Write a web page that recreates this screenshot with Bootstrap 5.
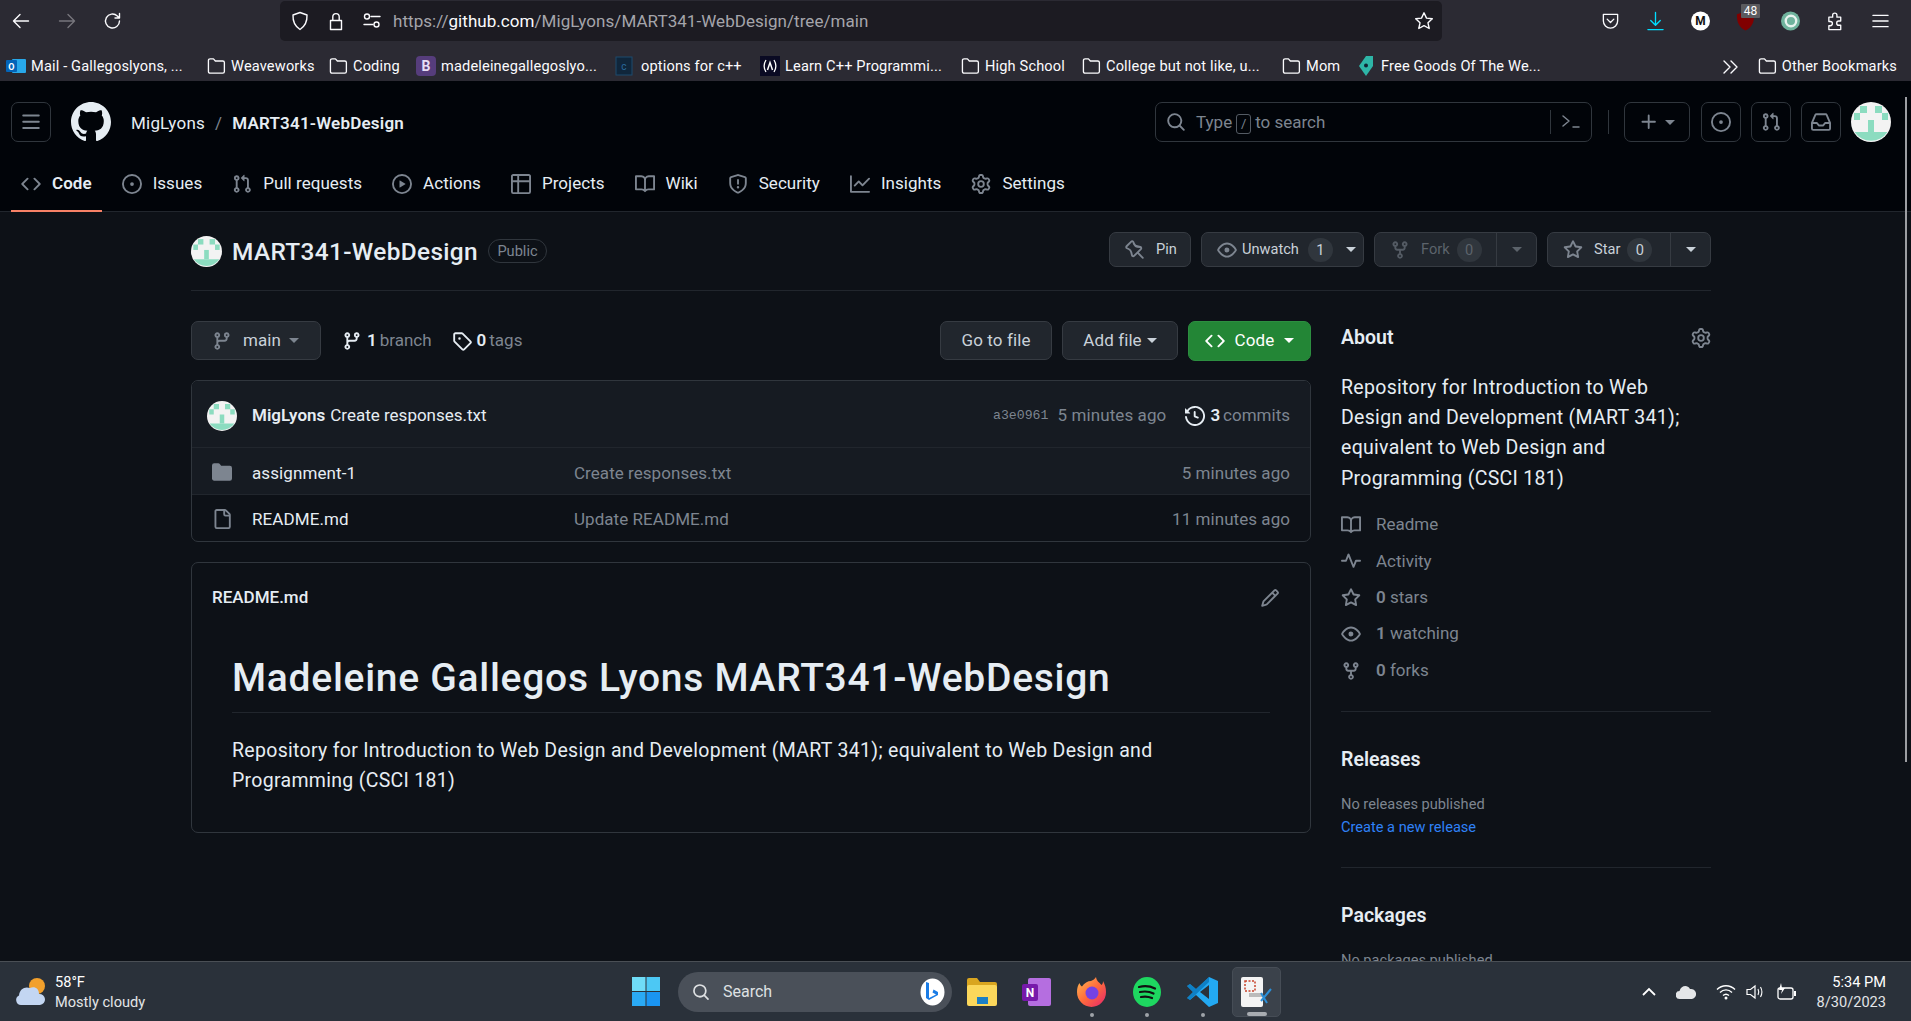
<!DOCTYPE html>
<html lang="en">
<head>
  <meta charset="UTF-8">
  <title>MigLyons/MART341-WebDesign</title>
  <link href="https://cdn.jsdelivr.net/npm/bootstrap@5.3.3/dist/css/bootstrap.min.css" rel="stylesheet">
  <style>
    html, body { height: 100%; overflow: hidden; }
    body { background: #0d1117; color: #e6edf3; font-family: Roboto, "Liberation Sans", sans-serif; font-size: 17px; }
    svg { display: block; flex: none; }
    a { text-decoration: none; color: inherit; }
    .oc { width: 20px; height: 20px; fill: currentColor; }
    .ln { fill: none; stroke: currentColor; stroke-width: 1.4; stroke-linecap: round; stroke-linejoin: round; }
    .shell { height: 1021px; }

    /* browser */
    .br-chrome { background: #2b2a33; height: 81px; color: #fbfbfe; flex: none; }
    .br-tools { height: 41px; padding: 0 0 0 11px; }
    .br-back { width: 20px; height: 20px; margin-right: 26px; }
    .br-off { color: #77767d; }
    .br-url { width: 1162px; height: 40px; margin-left: 157px; background: #1c1b22; border-radius: 5px; padding: 0 8px 0 10px; }
    .br-url svg { width: 20px; height: 20px; }
    .br-addr { font-size: 17px; color: #a5a5ab; margin-left: 11px; padding-top: 2px; white-space: nowrap; letter-spacing: .05px; }
    .br-addr b { font-weight: 400; color: #fbfbfe; }
    .br-ext { margin-left: auto; gap: 26px; padding-right: 21px; }
    .br-ext svg { width: 19px; height: 20px; }
    .br-ublock { position: relative; width: 19px; height: 20px; }
    .br-count { position: absolute; left: 5px; top: -7px; width: 19px; height: 14px; background: #5b5b5f; color: #fff; font-size: 12px; line-height: 14px; text-align: center; border-radius: 1px; }
    .br-marks { height: 40px; padding: 11px 14px 0 6px; font-size: 14.6px; white-space: nowrap; letter-spacing: .15px; }
    .br-mark { display: flex; align-items: center; gap: 5px; flex: none; }
    .br-mark svg { width: 20px; height: 20px; }
    .br-mark-f svg { width: 19px; height: 18px; }

    /* github header */
    .gh-page { position: relative; flex: 1 1 auto; min-height: 0; overflow: hidden; }
    .gh-top { background: #010409; height: 131px; border-bottom: 1px solid #21262d; }
    .gh-bar { height: 61px; padding: 21px 20px 0 11px; align-items: flex-start; }
    .gh-iconbtn { height: 40px; width: 40px; border: 1px solid #30363d; border-radius: 7px; color: #7d8590; display: flex; align-items: center; justify-content: center; flex: none; }
    .gh-logo { width: 40px; height: 40px; margin-left: 20px; fill: #e6edf3; }
    .gh-crumb { margin-left: 20px; height: 40px; line-height: 42px; white-space: nowrap; letter-spacing: .2px; }
    .gh-crumb i { font-style: normal; color: #7d8590; margin: 0 10px; }
    .gh-crumb b { font-weight: 600; }
    .gh-search { width: 437px; height: 40px; border: 1px solid #30363d; border-radius: 7px; color: #7d8590; margin-left: auto; padding: 0 10px; gap: 10px; line-height: 41px; }
    .gh-slash { display: inline-block; border: 1px solid #545b64; border-radius: 3px; width: 15px; height: 20px; line-height: 17px; font-size: 13px; text-align: center; margin: 0 4px; }
    .gh-vline { width: 1px; height: 24px; background: #30363d; }
    .gh-plus { width: 66px; gap: 6px; margin-left: 15px; }
    .gh-mini { margin-left: 10px; }
    .gh-caret { width: 0; height: 0; border-left: 5px solid transparent; border-right: 5px solid transparent; border-top: 5px solid currentColor; display: inline-block; flex: none; }
    .gh-tabs { height: 70px; padding: 0 11px; gap: 10px; align-items: stretch; letter-spacing: .04px; }
    .gh-tab { padding: 15px 10px 0; display: flex; align-items: center; gap: 11px; margin-bottom: -1px; border-bottom: 2px solid transparent; height: 70px; }
    .gh-tab svg { color: #7d8590; }
    .gh-tab.active { font-weight: 600; border-bottom-color: #f78166; }

    /* repo */
    .gh-wrap { width: 1520px; margin-left: 191px; }
    .gh-head { height: 79px; padding-top: 20px; border-bottom: 1px solid #21262d; align-items: flex-start; }
    .gh-title { font-size: 24.4px; font-weight: 500; line-height: 40px; margin-left: 10px; white-space: nowrap; letter-spacing: .35px; }
    .gh-public { margin-left: 10px; margin-top: 7px; height: 24px; width: 59px; border: 1px solid #30363d; border-radius: 12px; font-size: 14.6px; line-height: 22px; text-align: center; color: #7d8590; }
    .gh-acts { margin-left: auto; gap: 10px; }
    .gh-btn { display: flex; align-items: center; background: #21262d; border: 1px solid #363b42; border-radius: 7px; color: #c9d1d9; white-space: nowrap; }
    .gh-btn-sm { height: 35px; font-size: 14.6px; }
    .gh-btn-sm svg { color: #7d8590; }
    .gh-btn-lg { height: 39px; letter-spacing: .1px; }
    .gh-pill { background: #30363d; border-radius: 12px; width: 25px; height: 24px; line-height: 24px; text-align: center; }
    .gh-split { border-left: 1px solid #363b42; height: 100%; display: flex; align-items: center; justify-content: center; width: 40px; margin-left: auto; }
    .gh-dim { color: #5c636b; }
    .gh-dim svg { color: #545b64; }
    .gh-cols { gap: 30px; padding-top: 30px; align-items: flex-start; }
    .gh-main { width: 1120px; flex: none; }
    .gh-side { width: 370px; flex: none; padding-top: 1px; }
    .gh-branchrow { height: 39px; margin-bottom: 20px; }
    .gh-stat { display: flex; align-items: center; gap: 3px; color: #7d8590; padding-top: 1px; }
    .gh-stat b { color: #e6edf3; font-weight: 600; }
    .gh-stat svg { margin-right: 2px; margin-top: -1px; }
    .gh-green { background: #238636; border-color: #2c8e40; color: #fff; height: 40px; letter-spacing: .1px; }
    .gh-files { border: 1px solid #30363d; border-radius: 7px; overflow: hidden; }
    .gh-commit { height: 67px; background: #161b22; padding: 3px 20px 0 15px; border-bottom: 1px solid #21262d; }
    .gh-frow { height: 46px; padding: 5px 20px 0 20px; color: #7d8590; letter-spacing: .05px; }
    .gh-frow + .gh-frow { height: 47px; padding-top: 4px; border-top: 1px solid #21262d; }
    .gh-frow svg { margin-top: -3px; }
    .gh-frow-on { background: #161b22; }
    .gh-fname { color: #e6edf3; width: 322px; margin-left: 20px; flex: none; letter-spacing: .1px; }
    .gh-mono { font-family: "Liberation Mono", monospace; font-size: 13.2px; margin-right: 9px; }
    .gh-ago { letter-spacing: .1px; color: #7d8590; }
    .gh-readme { margin-top: 20px; border: 1px solid #30363d; border-radius: 7px; height: 271px; }
    .gh-rhead { height: 70px; padding: 0 30px 0 20px; font-size: 17px; font-weight: 500; }
    .gh-h1 { font-size: 39px; font-weight: 500; line-height: 49px; padding-bottom: 9px; border-bottom: 1px solid #21262d; margin: 21px 40px 23px; letter-spacing: .72px; }
    .gh-p { font-size: 19.5px; line-height: 30px; margin: 0 40px; letter-spacing: .3px; }
    .gh-about { height: 32px; font-size: 19.5px; font-weight: 600; }
    .gh-desc { font-size: 19.5px; line-height: 30.2px; margin: 19px 0 13px; padding-right: 24px; letter-spacing: .3px; }
    .gh-srow { height: 36.4px; display: flex; align-items: center; gap: 15px; color: #7d8590; }
    .gh-srow b { font-weight: 600; }
    .gh-rule { border-top: 1px solid #21262d; margin: 22px 0 36px; }
    .gh-sh { font-size: 19.5px; font-weight: 600; line-height: 24px; margin-bottom: 21px; }
    .gh-note { font-size: 14.6px; line-height: 23px; color: #7d8590; }
    .gh-link { color: #2f81f7; }
    .gh-thumb { position: absolute; left: 1905px; top: 16px; width: 2px; height: 665px; background: #9c9ea2; }

    /* taskbar */
    .tb-bar { height: 60px; flex: none; background: #2a313a; border-top: 1px solid #4a4f55; color: #fff; font-size: 14.6px; line-height: 20px; }
    .tb-left { width: 632px; padding-left: 15px; gap: 9px; flex: none; }
    .tb-sub { color: #e3e5e7; }
    .tb-win { width: 28px; height: 29px; }
    .tb-search { width: 274px; height: 40px; margin-left: 18px; border-radius: 20px; background: #4a5059; padding: 0 7px 0 14px; color: #dfe1e3; font-size: 16px; gap: 13px; }
    .tb-app { position: relative; display: flex; align-items: center; justify-content: center; height: 50px; }
    .tb-dot { position: absolute; bottom: 0; left: 50%; margin-left: -2px; width: 4px; height: 4px; background: #9fa3a8; border-radius: 50%; }
    .tb-tile { width: 49px; margin-left: 14px; background: #3b424b; border: 1px solid #464d56; border-radius: 5px; }
    .tb-bar2 { position: absolute; bottom: 0; left: 14px; width: 20px; height: 4px; background: #a8acb1; border-radius: 2px; }
    .tb-tray { margin-left: auto; padding-right: 25px; gap: 20px; }
    .tb-clock { text-align: right; margin-left: 1px; }
  </style>
</head>
<body>
  <svg width="0" height="0" style="position:absolute">
    <defs>
      <linearGradient id="fx-body" x1="0" y1="0" x2="1" y2="1"><stop offset="0" stop-color="#ffbd4f"/><stop offset=".5" stop-color="#ff6a3d"/><stop offset="1" stop-color="#e5246d"/></linearGradient>
      <symbol id="i-code" viewBox="0 0 16 16"><path d="M4.72 3.22a.75.75 0 0 1 1.06 1.06L2.06 8l3.72 3.72a.75.75 0 1 1-1.06 1.06L.47 8.53a.75.75 0 0 1 0-1.06Zm6.56 0a.75.75 0 1 0-1.06 1.06L13.94 8l-3.72 3.72a.75.75 0 1 0 1.06 1.06l4.25-4.25a.75.75 0 0 0 0-1.06Z"/></symbol>
      <symbol id="i-issue" viewBox="0 0 16 16"><path d="M8 9.5a1.5 1.5 0 1 0 0-3 1.5 1.5 0 0 0 0 3Z"/><path d="M8 0a8 8 0 1 1 0 16A8 8 0 0 1 8 0ZM1.5 8a6.5 6.5 0 1 0 13 0 6.5 6.5 0 0 0-13 0Z"/></symbol>
      <symbol id="i-pr" viewBox="0 0 16 16"><path d="M1.5 3.25a2.25 2.25 0 1 1 3 2.122v5.256a2.251 2.251 0 1 1-1.5 0V5.372A2.25 2.25 0 0 1 1.5 3.25Zm5.677-.177L9.573.677A.25.25 0 0 1 10 .854V2.5h1A2.5 2.5 0 0 1 13.5 5v5.628a2.251 2.251 0 1 1-1.5 0V5a1 1 0 0 0-1-1h-1v1.646a.25.25 0 0 1-.427.177L7.177 3.427a.25.25 0 0 1 0-.354ZM3.75 2.5a.75.75 0 1 0 0 1.5.75.75 0 0 0 0-1.5Zm0 9.5a.75.75 0 1 0 0 1.5.75.75 0 0 0 0-1.5Zm8.25.75a.75.75 0 1 0 1.5 0 .75.75 0 0 0-1.5 0Z"/></symbol>
      <symbol id="i-play" viewBox="0 0 16 16"><path d="M8 0a8 8 0 1 1 0 16A8 8 0 0 1 8 0ZM1.5 8a6.5 6.5 0 1 0 13 0 6.5 6.5 0 0 0-13 0Zm4.879-2.773 4.264 2.559a.25.25 0 0 1 0 .428l-4.264 2.559A.25.25 0 0 1 6 10.559V5.442a.25.25 0 0 1 .379-.215Z"/></symbol>
      <symbol id="i-table" viewBox="0 0 16 16"><path d="M0 1.75C0 .784.784 0 1.75 0h12.5C15.216 0 16 .784 16 1.75v12.5A1.75 1.75 0 0 1 14.25 16H1.75A1.75 1.75 0 0 1 0 14.25ZM6.5 6.5v8h7.75a.25.25 0 0 0 .25-.25V6.5Zm8-1.5V1.75a.25.25 0 0 0-.25-.25H6.5V5Zm-13 1.5v7.75c0 .138.112.25.25.25H5v-8ZM5 5V1.5H1.75a.25.25 0 0 0-.25.25V5Z"/></symbol>
      <symbol id="i-book" viewBox="0 0 16 16"><path d="M0 1.75A.75.75 0 0 1 .75 1h4.253c1.227 0 2.317.59 3 1.501A3.743 3.743 0 0 1 11.006 1h4.245a.75.75 0 0 1 .75.75v10.5a.75.75 0 0 1-.75.75h-4.507a2.25 2.25 0 0 0-1.591.659l-.622.621a.75.75 0 0 1-1.06 0l-.622-.621A2.25 2.25 0 0 0 5.258 13H.75a.75.75 0 0 1-.75-.75Zm7.251 10.324.004-5.073-.002-2.253A2.25 2.25 0 0 0 5.003 2.5H1.5v9h3.757a3.75 3.75 0 0 1 1.994.574ZM8.755 4.75l-.004 7.322a3.752 3.752 0 0 1 1.992-.572H14.5v-9h-3.495a2.25 2.25 0 0 0-2.25 2.25Z"/></symbol>
      <symbol id="i-shield" viewBox="0 0 16 16"><path d="M7.467.133a1.748 1.748 0 0 1 1.066 0l5.25 1.68A1.75 1.75 0 0 1 15 3.48V7c0 1.566-.32 3.182-1.303 4.682-.983 1.498-2.585 2.813-5.032 3.855a1.697 1.697 0 0 1-1.33 0c-2.447-1.042-4.049-2.357-5.032-3.855C1.32 10.182 1 8.566 1 7V3.48a1.75 1.75 0 0 1 1.217-1.667Zm.61 1.429a.25.25 0 0 0-.153 0l-5.25 1.68a.25.25 0 0 0-.174.238V7c0 1.358.275 2.666 1.057 3.86.784 1.194 2.121 2.34 4.366 3.297a.196.196 0 0 0 .154 0c2.245-.956 3.582-2.104 4.366-3.298C13.225 9.666 13.5 8.36 13.5 7V3.48a.251.251 0 0 0-.174-.237l-5.25-1.68ZM8.75 4.75v3a.75.75 0 0 1-1.5 0v-3a.75.75 0 0 1 1.5 0ZM9 10.5a1 1 0 1 1-2 0 1 1 0 0 1 2 0Z"/></symbol>
      <symbol id="i-graph" viewBox="0 0 16 16"><path d="M1.5 1.75V13.5h13.75a.75.75 0 0 1 0 1.5H.75a.75.75 0 0 1-.75-.75V1.75a.75.75 0 0 1 1.5 0Zm14.28 2.53-5.25 5.25a.75.75 0 0 1-1.06 0L7 7.06 4.28 9.78a.751.751 0 0 1-1.042-.018.751.751 0 0 1-.018-1.042l3.25-3.25a.75.75 0 0 1 1.06 0L10 7.94l4.72-4.72a.751.751 0 0 1 1.042.018.751.751 0 0 1 .018 1.042Z"/></symbol>
      <symbol id="i-gear" viewBox="0 0 16 16"><path d="M8 0a8.2 8.2 0 0 1 .701.031C9.444.095 9.99.645 10.16 1.29l.288 1.107c.018.066.079.158.212.224.231.114.454.243.668.386.123.082.233.09.299.071l1.103-.303c.644-.176 1.392.021 1.82.63.27.385.506.792.704 1.218.315.675.111 1.422-.364 1.891l-.814.806c-.049.048-.098.147-.088.294.016.257.016.515 0 .772-.01.147.038.246.088.294l.814.806c.475.469.679 1.216.364 1.891a7.977 7.977 0 0 1-.704 1.217c-.428.61-1.176.807-1.82.63l-1.102-.302c-.067-.019-.177-.011-.3.071a5.909 5.909 0 0 1-.668.386c-.133.066-.194.158-.211.224l-.29 1.106c-.168.646-.715 1.196-1.458 1.26a8.006 8.006 0 0 1-1.402 0c-.743-.064-1.289-.614-1.458-1.26l-.289-1.106c-.018-.066-.079-.158-.212-.224a5.738 5.738 0 0 1-.668-.386c-.123-.082-.233-.09-.299-.071l-1.103.303c-.644.176-1.392-.021-1.82-.63a8.12 8.12 0 0 1-.704-1.218c-.315-.675-.111-1.422.363-1.891l.815-.806c.05-.048.098-.147.088-.294a6.214 6.214 0 0 1 0-.772c.01-.147-.038-.246-.088-.294l-.815-.806C.635 6.045.431 5.298.746 4.623a7.92 7.92 0 0 1 .704-1.217c.428-.61 1.176-.807 1.82-.63l1.102.302c.067.019.177.011.3-.071.214-.143.437-.272.668-.386.133-.066.194-.158.211-.224l.29-1.106C6.009.645 6.556.095 7.299.03 7.53.01 7.764 0 8 0Zm-.571 1.525c-.036.003-.108.036-.137.146l-.289 1.105c-.147.561-.549.967-.998 1.189-.173.086-.34.183-.5.29-.417.278-.97.423-1.529.27l-1.103-.303c-.109-.03-.175.016-.195.045-.22.312-.412.644-.573.99-.014.031-.021.11.059.19l.815.806c.411.406.562.957.53 1.456a4.709 4.709 0 0 0 0 .582c.032.499-.119 1.05-.53 1.456l-.815.806c-.081.08-.073.159-.059.19.162.346.353.677.573.989.02.03.085.076.195.046l1.102-.303c.56-.153 1.113-.008 1.53.27.161.107.328.204.501.29.447.222.85.629.997 1.189l.289 1.105c.029.109.101.143.137.146a6.6 6.6 0 0 0 1.142 0c.036-.003.108-.036.137-.146l.289-1.105c.147-.561.549-.967.998-1.189.173-.086.34-.183.5-.29.417-.278.97-.423 1.529-.27l1.103.303c.109.029.175-.016.195-.045.22-.313.411-.644.573-.99.014-.031.021-.11-.059-.19l-.815-.806c-.411-.406-.562-.957-.53-1.456a4.709 4.709 0 0 0 0-.582c-.032-.499.119-1.05.53-1.456l.815-.806c.081-.08.073-.159.059-.19a6.464 6.464 0 0 0-.573-.989c-.02-.03-.085-.076-.195-.046l-1.102.303c-.56.153-1.113.008-1.53-.27a4.44 4.44 0 0 0-.501-.29c-.447-.222-.85-.629-.997-1.189l-.289-1.105c-.029-.11-.101-.143-.137-.146a6.6 6.6 0 0 0-1.142 0ZM11 8a3 3 0 1 1-6 0 3 3 0 0 1 6 0ZM9.5 8a1.5 1.5 0 1 0-3.001.001A1.5 1.5 0 0 0 9.5 8Z"/></symbol>
      <symbol id="i-github" viewBox="0 0 16 16"><path d="M8 0c4.42 0 8 3.58 8 8a8.013 8.013 0 0 1-5.45 7.59c-.4.08-.55-.17-.55-.38 0-.27.01-1.13.01-2.2 0-.75-.25-1.23-.54-1.48 1.78-.2 3.65-.88 3.65-3.95 0-.88-.31-1.59-.82-2.15.08-.2.36-1.02-.08-2.12 0 0-.67-.22-2.2.82-.64-.18-1.32-.27-2-.27-.68 0-1.36.09-2 .27-1.53-1.03-2.2-.82-2.2-.82-.44 1.1-.16 1.92-.08 2.12-.51.56-.82 1.28-.82 2.15 0 3.06 1.86 3.75 3.64 3.95-.23.2-.44.55-.51 1.07-.46.21-1.61.55-2.33-.66-.15-.24-.6-.83-1.23-.82-.67.01-.27.38.01.53.34.19.73.9.82 1.13.16.45.68 1.31 2.69.94 0 .67.01 1.3.01 1.49 0 .21-.15.45-.55.38A7.995 7.995 0 0 1 0 8c0-4.42 3.58-8 8-8Z"/></symbol>
      <symbol id="i-bars" viewBox="0 0 16 16"><path d="M1 2.75A.75.75 0 0 1 1.75 2h12.5a.75.75 0 0 1 0 1.5H1.75A.75.75 0 0 1 1 2.75Zm0 5A.75.75 0 0 1 1.75 7h12.5a.75.75 0 0 1 0 1.5H1.75A.75.75 0 0 1 1 7.75ZM1.75 12h12.5a.75.75 0 0 1 0 1.5H1.75a.75.75 0 0 1 0-1.5Z"/></symbol>
      <symbol id="i-search" viewBox="0 0 16 16"><path d="M10.68 11.74a6 6 0 0 1-7.922-8.982 6 6 0 0 1 8.982 7.922l3.04 3.04a.749.749 0 0 1-.326 1.275.749.749 0 0 1-.734-.215ZM11.5 7a4.499 4.499 0 1 0-8.997 0A4.499 4.499 0 0 0 11.5 7Z"/></symbol>
      <symbol id="i-plus" viewBox="0 0 16 16"><path d="M7.75 2a.75.75 0 0 1 .75.75V7h4.25a.75.75 0 0 1 0 1.5H8.5v4.25a.75.75 0 0 1-1.5 0V8.5H2.75a.75.75 0 0 1 0-1.5H7V2.75A.75.75 0 0 1 7.75 2Z"/></symbol>
      <symbol id="i-inbox" viewBox="0 0 16 16"><path d="M2.8 2.06A1.75 1.75 0 0 1 4.41 1h7.18c.7 0 1.333.417 1.61 1.06l2.74 6.395c.04.093.06.194.06.295v4.5A1.75 1.75 0 0 1 14.25 15H1.75A1.75 1.75 0 0 1 0 13.25v-4.5c0-.101.02-.202.06-.295Zm1.61.44a.25.25 0 0 0-.23.152L1.887 8H4.75a.75.75 0 0 1 .6.3L6.625 10h2.75l1.275-1.7a.75.75 0 0 1 .6-.3h2.863L11.82 2.652a.25.25 0 0 0-.23-.152Zm10.09 7h-2.875l-1.275 1.7a.75.75 0 0 1-.6.3h-3.5a.75.75 0 0 1-.6-.3L4.375 9.5H1.5v3.75c0 .138.112.25.25.25h12.5a.25.25 0 0 0 .25-.25Z"/></symbol>
      <symbol id="i-pin" viewBox="0 0 16 16"><path d="M4.456.734a1.75 1.75 0 0 1 2.826.504l.613 1.327a3.081 3.081 0 0 0 2.084 1.707l2.454.584c1.332.317 1.8 1.972.832 2.94L11.06 10l3.72 3.72a.748.748 0 0 1-.332 1.265.75.75 0 0 1-.729-.205L10 11.06l-2.204 2.205c-.968.968-2.623.5-2.94-.832l-.584-2.454a3.081 3.081 0 0 0-1.707-2.084l-1.327-.613a1.75 1.75 0 0 1-.504-2.826L4.456.734ZM5.92 1.866a.25.25 0 0 0-.404-.072L1.794 5.516a.25.25 0 0 0 .072.404l1.328.613A4.582 4.582 0 0 1 5.73 9.63l.584 2.454a.25.25 0 0 0 .42.12l5.47-5.47a.25.25 0 0 0-.12-.42L9.63 6.13a4.581 4.581 0 0 1-3.098-2.537L5.92 1.866Z"/></symbol>
      <symbol id="i-eye" viewBox="0 0 16 16"><path d="M8 2c1.981 0 3.671.992 4.933 2.078 1.27 1.091 2.187 2.345 2.637 3.023a1.62 1.62 0 0 1 0 1.798c-.45.678-1.367 1.932-2.637 3.023C11.67 13.008 9.981 14 8 14c-1.981 0-3.671-.992-4.933-2.078C1.797 10.83.88 9.576.43 8.898a1.62 1.62 0 0 1 0-1.798c.45-.677 1.367-1.931 2.637-3.022C4.33 2.992 6.019 2 8 2ZM1.679 7.932a.12.12 0 0 0 0 .136c.411.622 1.241 1.75 2.366 2.717C5.176 11.758 6.527 12.5 8 12.5c1.473 0 2.825-.742 3.955-1.715 1.124-.967 1.954-2.096 2.366-2.717a.12.12 0 0 0 0-.136c-.412-.621-1.242-1.75-2.366-2.717C10.824 4.242 9.473 3.5 8 3.5c-1.473 0-2.825.742-3.955 1.715-1.124.967-1.954 2.096-2.366 2.717ZM8 10a2 2 0 1 1-.001-3.999A2 2 0 0 1 8 10Z"/></symbol>
      <symbol id="i-fork" viewBox="0 0 16 16"><path d="M5 5.372v.878c0 .414.336.75.75.75h4.5a.75.75 0 0 0 .75-.75v-.878a2.25 2.25 0 1 1 1.5 0v.878a2.25 2.25 0 0 1-2.25 2.25h-1.5v2.128a2.251 2.251 0 1 1-1.5 0V8.5h-1.5A2.25 2.25 0 0 1 3.5 6.25v-.878a2.25 2.25 0 1 1 1.5 0ZM5 3.25a.75.75 0 1 0-1.5 0 .75.75 0 0 0 1.5 0Zm6.75.75a.75.75 0 1 0 0-1.5.75.75 0 0 0 0 1.5Zm-3 8.75a.75.75 0 1 0-1.5 0 .75.75 0 0 0 1.5 0Z"/></symbol>
      <symbol id="i-star" viewBox="0 0 16 16"><path d="M8 .25a.75.75 0 0 1 .673.418l1.882 3.815 4.21.612a.75.75 0 0 1 .416 1.279l-3.046 2.97.719 4.192a.751.751 0 0 1-1.088.791L8 12.347l-3.766 1.98a.75.75 0 0 1-1.088-.79l.72-4.194L.818 6.374a.75.75 0 0 1 .416-1.28l4.21-.611L7.327.668A.75.75 0 0 1 8 .25Zm0 2.445L6.615 5.5a.75.75 0 0 1-.564.41l-3.097.45 2.24 2.184a.75.75 0 0 1 .216.664l-.528 3.084 2.769-1.456a.75.75 0 0 1 .698 0l2.77 1.456-.53-3.084a.75.75 0 0 1 .216-.664l2.24-2.183-3.096-.45a.75.75 0 0 1-.564-.41L8 2.694Z"/></symbol>
      <symbol id="i-branch" viewBox="0 0 16 16"><path d="M9.5 3.25a2.25 2.25 0 1 1 3 2.122V6A2.5 2.5 0 0 1 10 8.5H6a1 1 0 0 0-1 1v1.128a2.251 2.251 0 1 1-1.5 0V5.372a2.25 2.25 0 1 1 1.5 0v1.836A2.493 2.493 0 0 1 6 7h4a1 1 0 0 0 1-1v-.628A2.25 2.25 0 0 1 9.5 3.25Zm-6 0a.75.75 0 1 0 1.5 0 .75.75 0 0 0-1.5 0Zm8.25-.75a.75.75 0 1 0 0 1.5.75.75 0 0 0 0-1.5ZM4.25 12a.75.75 0 1 0 0 1.5.75.75 0 0 0 0-1.5Z"/></symbol>
      <symbol id="i-tag" viewBox="0 0 16 16"><path d="M1 7.775V2.75C1 1.784 1.784 1 2.75 1h5.025c.464 0 .91.184 1.238.513l6.25 6.25a1.75 1.75 0 0 1 0 2.474l-5.026 5.026a1.75 1.75 0 0 1-2.474 0l-6.25-6.25A1.752 1.752 0 0 1 1 7.775Zm1.5 0c0 .066.026.13.073.177l6.25 6.25a.25.25 0 0 0 .354 0l5.025-5.025a.25.25 0 0 0 0-.354l-6.25-6.25a.25.25 0 0 0-.177-.073H2.75a.25.25 0 0 0-.25.25ZM6 5a1 1 0 1 1 0 2 1 1 0 0 1 0-2Z"/></symbol>
      <symbol id="i-history" viewBox="0 0 16 16"><path d="m.427 1.927 1.215 1.215a8.002 8.002 0 1 1-1.6 5.685.75.75 0 1 1 1.493-.154 6.5 6.5 0 1 0 1.18-4.458l1.358 1.358A.25.25 0 0 1 3.896 6H.25A.25.25 0 0 1 0 5.75V2.104a.25.25 0 0 1 .427-.177ZM7.75 4a.75.75 0 0 1 .75.75v2.992l2.028.812a.75.75 0 0 1-.557 1.392l-2.5-1A.751.751 0 0 1 7 8.25v-3.5A.75.75 0 0 1 7.75 4Z"/></symbol>
      <symbol id="i-dir" viewBox="0 0 16 16"><path d="M1.75 1A1.75 1.75 0 0 0 0 2.75v10.5C0 14.216.784 15 1.75 15h12.5A1.75 1.75 0 0 0 16 13.25v-8.5A1.75 1.75 0 0 0 14.25 3H7.5a.25.25 0 0 1-.2-.1l-.9-1.2C6.07 1.26 5.55 1 5 1H1.75Z"/></symbol>
      <symbol id="i-file" viewBox="0 0 16 16"><path d="M2 1.75C2 .784 2.784 0 3.75 0h6.586c.464 0 .909.184 1.237.513l2.914 2.914c.329.328.513.773.513 1.237v9.586A1.75 1.75 0 0 1 13.25 16h-9.5A1.75 1.75 0 0 1 2 14.25Zm1.75-.25a.25.25 0 0 0-.25.25v12.5c0 .138.112.25.25.25h9.5a.25.25 0 0 0 .25-.25V6h-2.75A1.75 1.75 0 0 1 9 4.25V1.5Zm6.75.062V4.25c0 .138.112.25.25.25h2.688l-.011-.013-2.914-2.914-.013-.011Z"/></symbol>
      <symbol id="i-pencil" viewBox="0 0 16 16"><path d="M11.013 1.427a1.75 1.75 0 0 1 2.474 0l1.086 1.086a1.75 1.75 0 0 1 0 2.474l-8.61 8.61c-.21.21-.47.364-.756.445l-3.251.93a.75.75 0 0 1-.927-.928l.929-3.25c.081-.286.235-.547.445-.758l8.61-8.61Zm.176 4.823L9.75 4.81l-6.286 6.287a.253.253 0 0 0-.064.108l-.558 1.953 1.953-.558a.253.253 0 0 0 .108-.064Zm1.238-3.763a.25.25 0 0 0-.354 0L10.811 3.75l1.439 1.44 1.263-1.263a.25.25 0 0 0 0-.354Z"/></symbol>
      <symbol id="i-pulse" viewBox="0 0 16 16"><path d="M6 2c.306 0 .582.187.696.471L10 10.731l1.304-3.26A.751.751 0 0 1 12 7h3.25a.75.75 0 0 1 0 1.5h-2.742l-1.812 4.528a.751.751 0 0 1-1.392 0L6 4.77 4.696 8.03A.75.75 0 0 1 4 8.5H.75a.75.75 0 0 1 0-1.5h2.742l1.812-4.529A.751.751 0 0 1 6 2Z"/></symbol>
      <symbol id="i-folder" viewBox="0 0 20 18"><path class="ln" d="M1.5 3.2c0-1 .7-1.7 1.7-1.7h3.6l2 2.2h7.8c1 0 1.7.7 1.7 1.700v9.400c0 1-.7 1.700-1.700 1.700H3.200c-1 0-1.700-.7-1.700-1.700Z"/></symbol>
      <symbol id="i-avatar" viewBox="0 0 40 40"><circle cx="20" cy="20" r="20" fill="#f3f3f3"/><g fill="#8cdcc0"><rect x="9" y="4" width="7" height="7"/><rect x="24" y="4" width="7" height="7"/><rect x="3" y="11" width="6" height="7"/><rect x="31" y="11" width="6" height="7"/><rect x="17" y="18" width="6" height="12"/><path d="M3.500 30h33a20 20 0 0 1-33 0Z"/></g></symbol>
    </defs>
  </svg>

  <div class="shell d-flex flex-column">
    <!-- firefox chrome -->
    <div class="br-chrome">
      <div class="br-tools d-flex align-items-center">
        <svg class="br-back" viewBox="0 0 20 20"><path class="ln" d="M17.5 10H2.5M9 3.5 2.5 10 9 16.5"/></svg>
        <svg class="br-back br-off" viewBox="0 0 20 20"><path class="ln" d="M2.5 10h15M11 3.5l6.5 6.5-6.5 6.5"/></svg>
        <svg class="br-back m-0" viewBox="0 0 20 20"><path class="ln" d="M16.5 10a7 7 0 1 1-2.2-5.1l2.2 2.1M16.5 2.5V7H12"/></svg>
        <div class="br-url d-flex align-items-center">
          <svg class="me-3" viewBox="0 0 20 20"><path class="ln" d="M10 1.500 17 4c.3 6.500-1.500 11-7 14.500C4.500 15 2.700 10.500 3 4Z"/></svg>
          <svg class="me-3" viewBox="0 0 20 20"><path class="ln" d="M4.500 9.500h11v9h-11ZM6.800 9.500V5.800a3.200 3.200 0 0 1 6.400 0v3.700"/></svg>
          <svg viewBox="0 0 20 20"><path class="ln" d="M9 5.500h9M2 13.500h9"/><circle class="ln" cx="5" cy="5.500" r="2.500"/><circle class="ln" cx="14.500" cy="13.500" r="2.500"/></svg>
          <span class="br-addr">https://<b>github.com</b>/MigLyons/MART341-WebDesign/tree/main</span>
          <svg class="ms-auto" viewBox="0 0 20 20"><path class="ln" d="m10 1.800 2.500 5.300 5.800.7-4.300 4 1.200 5.700-5.200-2.900-5.200 2.900 1.200-5.700-4.300-4 5.800-.7Z"/></svg>
        </div>
        <div class="br-ext d-flex align-items-center">
          <svg viewBox="0 0 20 20"><path class="ln" d="M2.500 3h15v7a7.500 7.500 0 0 1-15 0Z"/><path class="ln" d="m6.500 8 3.500 3.500L13.500 8"/></svg>
          <svg style="color:#00ddff" viewBox="0 0 20 20"><path class="ln" d="M10 1v13M5 9.500l5 5 5-5M2 19h16"/></svg>
          <svg viewBox="0 0 20 20"><circle cx="10" cy="10" r="10" fill="#fff"/><text x="10" y="14.500" font-size="12.500" font-weight="700" text-anchor="middle" fill="#111" font-family="Roboto">M</text></svg>
          <div class="br-ublock"><svg viewBox="0 0 20 20"><path fill="#800000" d="M10 0 19 3c.3 8-2 14-9 17C3 17 .7 11 1 3Z"/></svg><span class="br-count">48</span></div>
          <svg viewBox="0 0 20 20"><circle cx="10" cy="10" r="10" fill="#6fb39d"/><circle cx="10.500" cy="10" r="5.500" fill="none" stroke="#e8f3ef" stroke-width="2.500"/></svg>
          <svg viewBox="0 0 20 20"><path class="ln" d="M3 6h4V4a2.200 2.200 0 0 1 4.500 0v2h4v4h-2a2 2 0 0 0 0 4.500h2V19H3v-4h1.500a2 2 0 0 0 0-4.500H3Z"/></svg>
          <svg viewBox="0 0 20 20"><path class="ln" d="M2 4h16M2 10h16M2 16h16"/></svg>
        </div>
      </div>
      <div class="br-marks d-flex align-items-center">
        <a class="br-mark" style="width:201px"><svg viewBox="0 0 20 20"><rect x="6" y="3" width="14" height="14" rx="1" fill="#28a8ea"/><rect x="0" y="4" width="11" height="12" rx="1" fill="#0364b8"/><text x="5.500" y="13.500" font-size="9" font-weight="700" text-anchor="middle" fill="#fff" font-family="Roboto">O</text></svg>Mail - Gallegoslyons, ...</a>
        <a class="br-mark br-mark-f" style="width:122px"><svg><use href="#i-folder"/></svg>Weaveworks</a>
        <a class="br-mark br-mark-f" style="width:87px"><svg><use href="#i-folder"/></svg>Coding</a>
        <a class="br-mark" style="width:199px"><svg viewBox="0 0 20 20"><rect width="20" height="20" rx="4" fill="#563d7c"/><text x="10" y="15" font-size="14" font-weight="700" text-anchor="middle" fill="#e6dcf5" font-family="Roboto">B</text></svg>madeleinegallegoslyo...</a>
        <a class="br-mark" style="width:145px"><svg viewBox="0 0 20 20"><rect x="1" y="1" width="16" height="18" fill="#10263b" stroke="#1d4a6e"/><text x="9" y="14" font-size="10" text-anchor="middle" fill="#2a6a9c" font-family="Roboto">c</text></svg><span class="ms-1" style="margin-left:1px!important">options for c++</span></a>
        <a class="br-mark" style="width:201px"><svg viewBox="0 0 20 20"><rect width="20" height="20" fill="#0a0a23"/><path d="M6 4C3.500 8 3.500 12 6 16M14 4c2.500 4 2.500 8 0 12" fill="none" stroke="#fff" stroke-width="1.300"/><path d="m7.500 14 2.500-7.500 2.500 7.500" fill="none" stroke="#fff" stroke-width="1.500"/></svg>Learn C++ Programmi...</a>
        <a class="br-mark br-mark-f" style="width:121px"><svg><use href="#i-folder"/></svg>High School</a>
        <a class="br-mark br-mark-f" style="width:200px"><svg><use href="#i-folder"/></svg>College but not like, u...</a>
        <a class="br-mark br-mark-f" style="width:74px"><svg><use href="#i-folder"/></svg>Mom</a>
        <a class="br-mark"><svg viewBox="0 0 20 20"><path d="M10 0h7v10L10 20 3 10Z" fill="#2eb5a7"/><circle cx="10" cy="9.500" r="2" fill="#123"/></svg>Free Goods Of The We...</a>
        <svg class="ms-auto" width="15" height="14" viewBox="0 0 15 14"><path class="ln" d="m1 1 6 6-6 6M8 1l6 6-6 6"/></svg>
        <a class="br-mark br-mark-f" style="margin-left:20px"><svg><use href="#i-folder"/></svg>Other Bookmarks</a>
      </div>
    </div>

    <div class="gh-page">
      <!-- github header -->
      <header class="gh-top">
        <div class="gh-bar d-flex">
          <a class="gh-iconbtn"><svg class="oc"><use href="#i-bars"/></svg></a>
          <svg class="gh-logo"><use href="#i-github"/></svg>
          <div class="gh-crumb"><a>MigLyons</a><i>/</i><b>MART341-WebDesign</b></div>
          <div class="gh-search d-flex align-items-center">
            <svg class="oc"><use href="#i-search"/></svg>
            <span class="flex-grow-1">Type<span class="gh-slash">/</span>to search</span>
            <span class="gh-vline"></span>
            <svg class="oc"><path class="ln" style="stroke-width:1.500" d="m2 4 6 5-6 5M12 15h6"/></svg>
          </div>
          <span class="gh-vline ms-3 mt-2"></span>
          <a class="gh-iconbtn gh-plus"><svg class="oc"><use href="#i-plus"/></svg><span class="gh-caret"></span></a>
          <a class="gh-iconbtn" style="margin-left:11px"><svg class="oc"><use href="#i-issue"/></svg></a>
          <a class="gh-iconbtn gh-mini"><svg class="oc"><use href="#i-pr"/></svg></a>
          <a class="gh-iconbtn gh-mini"><svg class="oc"><use href="#i-inbox"/></svg></a>
          <svg class="gh-mini" width="40" height="40"><use href="#i-avatar"/></svg>
        </div>
        <nav class="gh-tabs d-flex">
          <a class="gh-tab active"><svg class="oc"><use href="#i-code"/></svg>Code</a>
          <a class="gh-tab"><svg class="oc"><use href="#i-issue"/></svg>Issues</a>
          <a class="gh-tab"><svg class="oc"><use href="#i-pr"/></svg>Pull requests</a>
          <a class="gh-tab"><svg class="oc"><use href="#i-play"/></svg>Actions</a>
          <a class="gh-tab"><svg class="oc"><use href="#i-table"/></svg>Projects</a>
          <a class="gh-tab"><svg class="oc"><use href="#i-book"/></svg>Wiki</a>
          <a class="gh-tab"><svg class="oc"><use href="#i-shield"/></svg>Security</a>
          <a class="gh-tab"><svg class="oc"><use href="#i-graph"/></svg>Insights</a>
          <a class="gh-tab"><svg class="oc"><use href="#i-gear"/></svg>Settings</a>
        </nav>
      </header>

      <div class="gh-wrap">
        <!-- repo title and actions -->
        <div class="gh-head d-flex">
          <svg width="31" height="31" class="mt-1"><use href="#i-avatar"/></svg>
          <div class="gh-title">MART341-WebDesign</div>
          <div class="gh-public">Public</div>
          <div class="gh-acts d-flex">
            <a class="gh-btn gh-btn-sm" style="width:82px;padding-left:15px;gap:11px"><svg class="oc"><use href="#i-pin"/></svg>Pin</a>
            <a class="gh-btn gh-btn-sm" style="width:163px;padding-left:15px;gap:5px"><svg class="oc"><use href="#i-eye"/></svg>Unwatch<span class="gh-pill ms-1">1</span><span class="gh-caret ms-2"></span></a>
            <a class="gh-btn gh-btn-sm gh-dim" style="width:163px;padding-left:15px;gap:11px"><svg class="oc"><use href="#i-fork"/></svg>Fork<span class="gh-pill" style="margin-left:-4px">0</span><span class="gh-split"><span class="gh-caret"></span></span></a>
            <a class="gh-btn gh-btn-sm" style="width:164px;padding-left:15px;gap:11px"><svg class="oc"><use href="#i-star"/></svg>Star<span class="gh-pill" style="margin-left:-4px">0</span><span class="gh-split"><span class="gh-caret"></span></span></a>
          </div>
        </div>

        <div class="gh-cols d-flex">
          <main class="gh-main">
            <div class="gh-branchrow d-flex align-items-center">
              <a class="gh-btn gh-btn-lg" style="width:130px;padding-left:20px"><svg class="oc" style="color:#7d8590"><use href="#i-branch"/></svg><span style="margin:1px 8px 0 11px">main</span><span class="gh-caret" style="color:#7d8590"></span></a>
              <a class="gh-stat" style="margin-left:21px"><svg class="oc" style="color:#e6edf3"><use href="#i-branch"/></svg><b>1</b>branch</a>
              <a class="gh-stat" style="margin-left:20px"><svg class="oc" style="color:#e6edf3"><use href="#i-tag"/></svg><b>0</b>tags</a>
              <a class="gh-btn gh-btn-lg justify-content-center ms-auto" style="width:112px">Go to file</a>
              <a class="gh-btn gh-btn-lg justify-content-center" style="width:116px;margin-left:10px;gap:5px">Add file<span class="gh-caret"></span></a>
              <a class="gh-btn gh-green justify-content-center" style="width:123px;margin-left:10px;gap:10px"><svg class="oc"><use href="#i-code"/></svg>Code<span class="gh-caret"></span></a>
            </div>

            <!-- file list -->
            <div class="gh-files">
              <div class="gh-commit d-flex align-items-center">
                <svg width="30" height="30"><use href="#i-avatar"/></svg>
                <b style="font-weight:600;margin-left:15px">MigLyons</b><span style="margin-left:5px">Create responses.txt</span>
                <span class="gh-mono ms-auto" style="color:#7d8590">a3e0961</span>
                <span class="gh-ago">5 minutes ago</span>
                <span class="gh-stat" style="margin-left:19px"><svg class="oc" style="color:#e6edf3"><use href="#i-history"/></svg><b>3</b>commits</span>
              </div>
              <div class="gh-frow gh-frow-on d-flex align-items-center"><svg class="oc"><use href="#i-dir"/></svg><a class="gh-fname">assignment-1</a><a>Create responses.txt</a><span class="ms-auto">5 minutes ago</span></div>
              <div class="gh-frow d-flex align-items-center"><svg class="oc"><use href="#i-file"/></svg><a class="gh-fname">README.md</a><a>Update README.md</a><span class="ms-auto">11 minutes ago</span></div>
            </div>

            <!-- readme -->
            <article class="gh-readme">
              <div class="gh-rhead d-flex align-items-center justify-content-between">README.md<svg class="oc" style="color:#7d8590"><use href="#i-pencil"/></svg></div>
              <h1 class="gh-h1">Madeleine Gallegos Lyons MART341-WebDesign</h1>
              <p class="gh-p">Repository for Introduction to Web Design and Development (MART 341); equivalent to Web Design and Programming (CSCI 181)</p>
            </article>
          </main>

          <aside class="gh-side">
            <div class="gh-about d-flex align-items-center justify-content-between">About<svg class="oc" style="color:#7d8590"><use href="#i-gear"/></svg></div>
            <p class="gh-desc">Repository for Introduction to Web Design and Development (MART 341); equivalent to Web Design and Programming (CSCI 181)</p>
            <a class="gh-srow"><svg class="oc"><use href="#i-book"/></svg>Readme</a>
            <a class="gh-srow"><svg class="oc"><use href="#i-pulse"/></svg>Activity</a>
            <a class="gh-srow"><svg class="oc"><use href="#i-star"/></svg><span><b>0</b> stars</span></a>
            <a class="gh-srow"><svg class="oc"><use href="#i-eye"/></svg><span><b>1</b> watching</span></a>
            <a class="gh-srow"><svg class="oc"><use href="#i-fork"/></svg><span><b>0</b> forks</span></a>
            <div class="gh-rule"></div>
            <div class="gh-sh">Releases</div>
            <div class="gh-note">No releases published</div>
            <a class="gh-note gh-link d-block">Create a new release</a>
            <div class="gh-rule" style="margin-top:28px"></div>
            <div class="gh-sh">Packages</div>
            <div class="gh-note">No packages published</div>
          </aside>
        </div>
      </div>
      <div class="gh-thumb"></div>
    </div>

    <!-- windows taskbar -->
    <footer class="tb-bar d-flex align-items-center">
      <div class="tb-left d-flex align-items-center">
        <svg width="31" height="28" viewBox="0 0 31 28"><circle cx="22" cy="8" r="8" fill="#f2a02c"/><path d="M6 27a5 5 0 0 1-2-9.500C4.500 11 10 8 15 10c5-2 9 1 9 6a5.500 5.500 0 0 1 1 11Z" fill="#c3d6f2"/></svg>
        <div><div>58°F</div><div class="tb-sub">Mostly cloudy</div></div>
      </div>
      <svg class="tb-win" viewBox="0 0 28 29"><rect width="13.500" height="14" fill="#6fdcf7"/><rect x="14.500" width="13.500" height="14" fill="#4cc8f4"/><rect y="15" width="13.500" height="14" fill="#2aaaf5"/><rect x="14.500" y="15" width="13.500" height="14" fill="#1a95f2"/></svg>
      <div class="tb-search d-flex align-items-center">
        <svg width="18" height="20" viewBox="0 0 16 16" fill="currentColor"><use href="#i-search"/></svg>
        <span>Search</span>
        <svg class="ms-auto" width="25" height="28" viewBox="0 0 25 28"><ellipse cx="12.500" cy="14" rx="12" ry="13.500" fill="#fff"/><path d="M9 5v15l7-3.500-3.500-2 1-3 4.500 2.500v3L9 22l-3-2V4Z" fill="#1a7ce6"/></svg>
      </div>
      <svg style="margin-left:15px" width="30" height="28" viewBox="0 0 30 28"><path d="M0 2a2 2 0 0 1 2-2h8l3 4h15a2 2 0 0 1 2 2v3H0Z" fill="#d9a520"/><rect y="7" width="30" height="21" rx="2" fill="#fbd75b"/><rect x="10" y="19" width="11" height="7" fill="#1b7fc4"/></svg>
      <svg style="margin-left:25px" width="29" height="28" viewBox="0 0 29 28"><rect x="6" y="0" width="23" height="28" rx="2" fill="#b56ee0"/><rect y="6" width="16" height="17" rx="2" fill="#7719aa"/><text x="8" y="19" font-size="12" font-weight="700" text-anchor="middle" fill="#fff" font-family="Roboto">N</text></svg>
      <div class="tb-app" style="width:29px;margin-left:26px"><svg width="29" height="30" viewBox="0 0 29 30"><path d="M19 0c.5 4 3 5 5.500 8C26 6.500 26 5.500 26 4c2 3.500 3 7 3 11a14.500 15 0 0 1-29 0C0 11 1 8 2.500 6 3 8 4 9 5 9.500 7 6 11 4 14 4c2-1 4-2 5-4Z" fill="url(#fx-body)"/><circle cx="15" cy="16" r="6.500" fill="#7542e5"/></svg><span class="tb-dot"></span></div>
      <div class="tb-app" style="width:28px;margin-left:27px"><svg width="28" height="30" viewBox="0 0 28 30"><ellipse cx="14" cy="15" rx="14" ry="15" fill="#1ed760"/><path d="M6 10c6-1.500 11-1 16 1.500M7 15c5-1 9-.8 13.500 1.500M8 20c4-.8 7.500-.5 11 1" fill="none" stroke="#111" stroke-width="2.200" stroke-linecap="round"/></svg><span class="tb-dot"></span></div>
      <div class="tb-app" style="width:31px;margin-left:26px"><svg width="31" height="30" viewBox="0 0 31 30"><path d="M22 0 31 4v22l-9 4-13-12-6 5-3-2 6-6-6-6 3-2 6 5Z" fill="#23a9f2"/><path d="M22 8 13 15l9 7Z" fill="#2a313a"/><path d="M22 0 9 12 3 7 0 9l6 6-6 6 3 2L22 5Z" fill="#0065a9" opacity=".6"/></svg><span class="tb-dot"></span></div>
      <div class="tb-app tb-tile"><svg width="31" height="30" viewBox="0 0 31 30"><rect width="22" height="30" rx="2" fill="#f4f4f4"/><path d="M4 4h10v10H4Z" fill="none" stroke="#c8432b" stroke-width="1.500" stroke-dasharray="2 1.500"/><path d="M8 18h14" stroke="#bbb" stroke-width="4"/><path d="M30 12 20 24M20 16l6 10" stroke="#2a8fd8" stroke-width="2" fill="none"/></svg><span class="tb-bar2"></span></div>

      <div class="tb-tray d-flex align-items-center">
        <svg width="14" height="9" viewBox="0 0 14 9"><path d="m1 8 6-6 6 6" fill="none" stroke="#fff" stroke-width="1.800"/></svg>
        <svg width="20" height="16" viewBox="0 0 20 16"><path d="M4 15a4 4 0 0 1-.5-8C5 2 11 0 14 5a5 5 0 0 1 2 10Z" fill="#e4e6e8"/></svg>
        <svg width="20" height="16" viewBox="0 0 20 16"><path d="M1 5.500c5-5 13-5 18 0M4 8.500c3.500-3.500 8.500-3.500 12 0M7 11.500c2-1.800 4-1.800 6 0" fill="none" stroke="#fff" stroke-width="1.400"/><circle cx="10" cy="14" r="1.500" fill="#fff"/></svg>
        <svg width="18" height="18" viewBox="0 0 18 18" style="margin-left:-10px"><path d="M1 6.500h3.500L9 3v12l-4.500-3.500H1Z" fill="none" stroke="#fff" stroke-width="1.200"/><path d="M12 6c1 2 1 4 0 6M14.500 4c1.700 3 1.700 7 0 10" fill="none" stroke="#fff" stroke-width="1.100"/></svg>
        <svg width="20" height="18" viewBox="0 0 20 18" style="margin-left:-8px"><rect x="2" y="5" width="15" height="11" rx="2" fill="none" stroke="#fff" stroke-width="1.300"/><path d="M5 0 3 7h3l-1 4 4-6H6Z" fill="#fff"/><rect x="18" y="8" width="2" height="5" fill="#fff"/></svg>
        <div class="tb-clock"><div>5:34 PM</div><div class="tb-sub">8/30/2023</div></div>
      </div>
    </footer>
  </div>
  <script src="https://cdn.jsdelivr.net/npm/bootstrap@5.3.3/dist/js/bootstrap.bundle.min.js"></script>
</body>
</html>
